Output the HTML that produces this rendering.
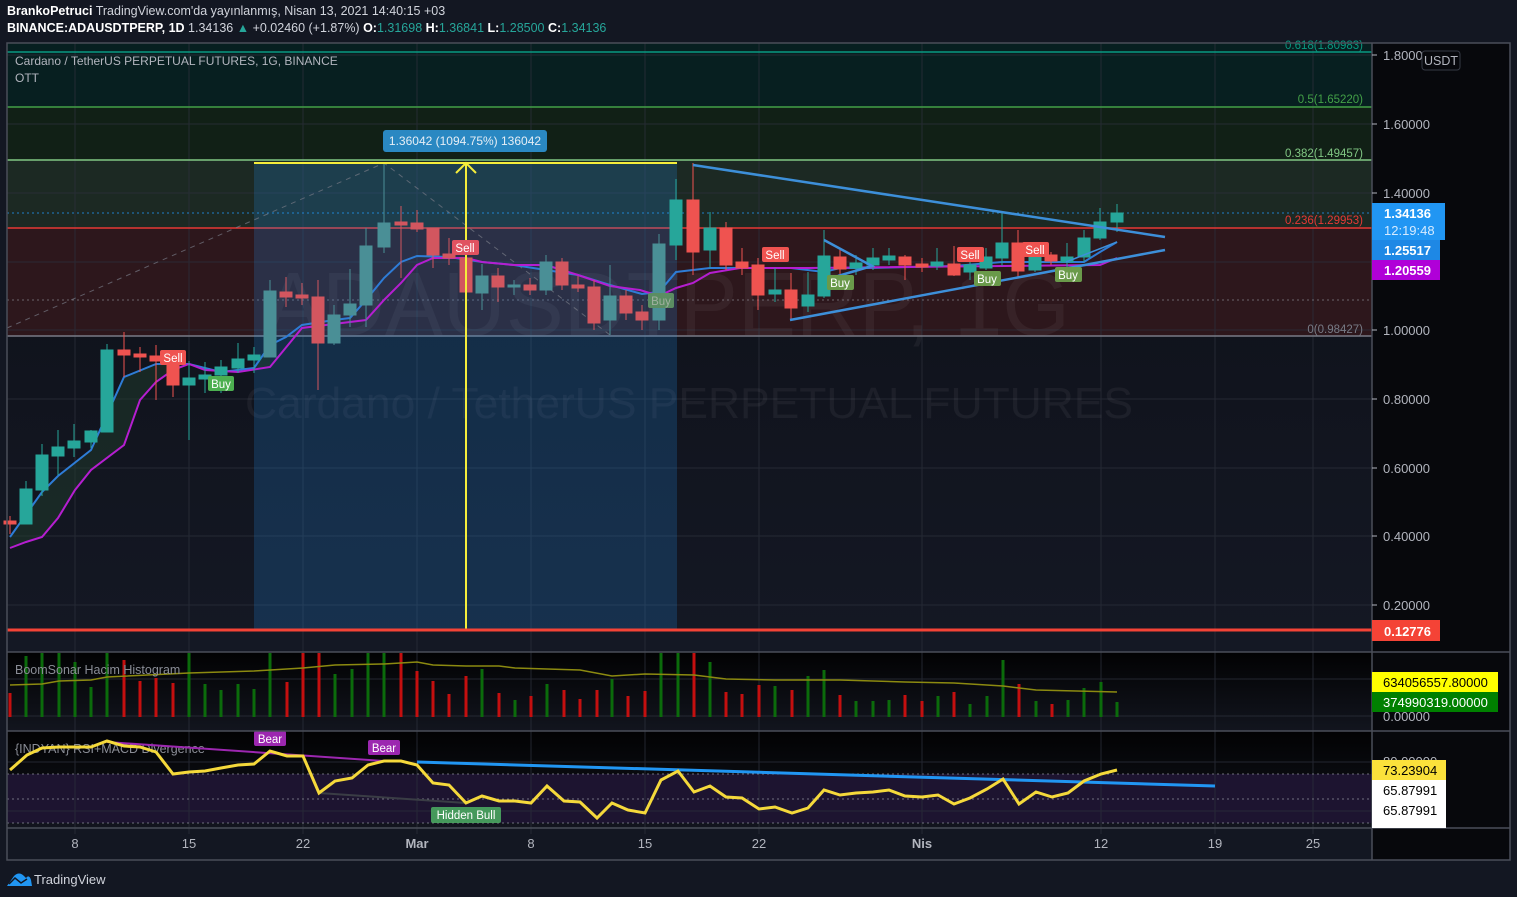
<!DOCTYPE html>
<html><head><meta charset="utf-8"><style>
html,body{margin:0;padding:0;background:#131722;width:1517px;height:897px;overflow:hidden;font-family:"Liberation Sans",sans-serif}
.h{position:absolute;left:7px;color:#d1d4dc;font-size:12.5px;white-space:nowrap}
</style></head><body>
<div class="h" style="top:4px"><b style="color:#fff">BrankoPetruci</b> TradingView.com'da yayınlanmış, Nisan 13, 2021 14:40:15 +03</div>
<div class="h" style="top:21px"><b style="color:#fff">BINANCE:ADAUSDTPERP, 1D</b> 1.34136 <span style="color:#26a69a">▲</span> +0.02460 (+1.87%) <b style="color:#fff">O:</b><span style="color:#26a69a">1.31698</span> <b style="color:#fff">H:</b><span style="color:#26a69a">1.36841</span> <b style="color:#fff">L:</b><span style="color:#26a69a">1.28500</span> <b style="color:#fff">C:</b><span style="color:#26a69a">1.34136</span></div>
<svg width="1517" height="897" style="position:absolute;left:0;top:0" font-family="Liberation Sans, sans-serif">
<defs>
<linearGradient id="pb" x1="0" y1="0" x2="0" y2="1"><stop offset="0" stop-color="#0d0f16"/><stop offset="1" stop-color="#141824"/></linearGradient>
<linearGradient id="vb" x1="0" y1="0" x2="0" y2="1"><stop offset="0" stop-color="#020203"/><stop offset="1" stop-color="#12151e"/></linearGradient>
</defs>
<rect x="7" y="43" width="1365" height="609" fill="url(#pb)"/>
<rect x="7" y="43" width="1365" height="64" fill="#071f20"/>
<rect x="7" y="107" width="1365" height="53" fill="#112016"/>
<rect x="7" y="160" width="1365" height="68" fill="#1c2923"/>
<rect x="7" y="228" width="1365" height="108" fill="#2d171c"/>
<rect x="1372" y="43" width="138" height="817" fill="#07080c"/>
<rect x="7" y="652" width="1365" height="79" fill="url(#vb)"/>
<rect x="7" y="731" width="1365" height="97" fill="url(#vb)"/>
<rect x="7" y="774" width="1365" height="49" fill="#1d1430"/>
<rect x="7" y="828" width="1365" height="32" fill="#131722"/>
<g stroke="#2a2e39" stroke-width="1" opacity="0.8">
<line x1="75" y1="43" x2="75" y2="834"/><line x1="189" y1="43" x2="189" y2="834"/><line x1="303" y1="43" x2="303" y2="834"/><line x1="417" y1="43" x2="417" y2="834"/><line x1="531" y1="43" x2="531" y2="834"/><line x1="645" y1="43" x2="645" y2="834"/><line x1="759" y1="43" x2="759" y2="834"/><line x1="922" y1="43" x2="922" y2="834"/><line x1="1101" y1="43" x2="1101" y2="834"/><line x1="1215" y1="43" x2="1215" y2="834"/><line x1="1313" y1="43" x2="1313" y2="834"/>
<line x1="7" y1="55" x2="1372" y2="55"/><line x1="7" y1="124" x2="1372" y2="124"/><line x1="7" y1="193" x2="1372" y2="193"/><line x1="7" y1="262" x2="1372" y2="262"/><line x1="7" y1="330" x2="1372" y2="330"/><line x1="7" y1="399" x2="1372" y2="399"/><line x1="7" y1="468" x2="1372" y2="468"/><line x1="7" y1="536" x2="1372" y2="536"/><line x1="7" y1="605" x2="1372" y2="605"/>
<line x1="7" y1="679" x2="1372" y2="679"/><line x1="7" y1="716" x2="1372" y2="716"/><line x1="7" y1="762" x2="1372" y2="762"/><line x1="7" y1="811" x2="1372" y2="811"/>
</g>
<text x="264" y="335" font-size="90" fill="#ffffff" fill-opacity="0.05" textLength="806" lengthAdjust="spacingAndGlyphs">ADAUSDTPERP, 1G</text>
<text x="245" y="418" font-size="44" fill="#ffffff" fill-opacity="0.05" textLength="888" lengthAdjust="spacingAndGlyphs">Cardano / TetherUS PERPETUAL FUTURES</text>
<line x1="7" y1="52" x2="1372" y2="52" stroke="#089981" stroke-width="1.5"/>
<line x1="7" y1="107" x2="1372" y2="107" stroke="#43a047" stroke-width="1.5"/>
<line x1="7" y1="160" x2="1372" y2="160" stroke="#81c784" stroke-width="1.5"/>
<line x1="7" y1="228" x2="1372" y2="228" stroke="#e53935" stroke-width="1.5"/>
<line x1="7" y1="336" x2="1372" y2="336" stroke="#787b86" stroke-width="1.5"/>
<g font-size="11.5" text-anchor="end">
<text x="1363" y="49" fill="#089981">0.618(1.80983)</text>
<text x="1363" y="103" fill="#43a047">0.5(1.65220)</text>
<text x="1363" y="157" fill="#81c784">0.382(1.49457)</text>
<text x="1363" y="224" fill="#e53935">0.236(1.29953)</text>
<text x="1363" y="333" fill="#787b86">0(0.98427)</text>
</g>
<line x1="7" y1="213" x2="1372" y2="213" stroke="#2196f3" stroke-dasharray="2 3" opacity="0.8"/>
<line x1="7" y1="300" x2="1372" y2="300" stroke="#9598a1" stroke-dasharray="2 3" opacity="0.6"/>
<rect x="254" y="163" width="423" height="467" fill="#2196f3" fill-opacity="0.2"/>
<polyline points="7,328 384,163 610,335" fill="none" stroke="#787b86" stroke-dasharray="5 5" opacity="0.7"/>
<polygon points="10,537 42,492 58,476 91,450 124,377 156,364 189,364 221,372 254,368 270,345 270,367 238,372 205,370 189,364 173,370 156,382 140,400 124,445 91,470 75,490 58,518 42,537 26,542 10,548" fill="#1f3b2b" opacity="0.5"/>
<polyline fill="none" stroke="#2e7cd6" stroke-width="2" points="10,537 42,492 58,476 91,450 124,377 156,364 189,364 221,372 254,368 270,345 286,337 302,325 334,320 350,318 366,300 384,278 401,262 417,256 449,257 482,262 514,265 546,270 578,275 610,285 642,294 659,292 676,272 710,268 758,268 791,268 824,272 840,268 870,268 954,266 1002,262 1084,262 1100,252 1117,242"/>
<polyline fill="none" stroke="#b51ed0" stroke-width="2" points="10,548 26,542 42,537 58,518 75,490 91,470 124,445 140,400 156,382 173,370 189,364 205,370 238,372 270,367 302,328 350,322 366,320 384,300 401,283 417,265 433,258 466,258 482,262 514,265 546,265 578,275 610,286 640,290 659,296 676,288 693,283 710,273 740,268 808,268 1100,265 1117,258"/>
<g stroke-width="1">
<g fill="#ef5350" stroke="#ef5350">
<line x1="10" y1="516" x2="10" y2="534"/><rect x="4" y="521" width="12" height="3"/>
<line x1="124" y1="332" x2="124" y2="377"/><rect x="118" y="350" width="12" height="5"/>
<line x1="140" y1="347" x2="140" y2="372"/><rect x="134" y="354" width="12" height="3"/>
<line x1="156" y1="345" x2="156" y2="400"/><rect x="150" y="356" width="12" height="5"/>
<line x1="173" y1="350" x2="173" y2="397"/><rect x="167" y="362" width="12" height="23"/>
<line x1="693" y1="163" x2="693" y2="275"/><rect x="687" y="200" width="12" height="52"/>
<line x1="726" y1="222" x2="726" y2="270"/><rect x="720" y="228" width="12" height="37"/>
<line x1="742" y1="248" x2="742" y2="275"/><rect x="736" y="262" width="12" height="6"/>
<line x1="758" y1="258" x2="758" y2="310"/><rect x="752" y="265" width="12" height="30"/>
<line x1="791" y1="273" x2="791" y2="320"/><rect x="785" y="290" width="12" height="18"/>
<line x1="840" y1="248" x2="840" y2="278"/><rect x="834" y="257" width="12" height="12"/>
<line x1="905" y1="255" x2="905" y2="280"/><rect x="899" y="257" width="12" height="8"/>
<line x1="922" y1="258" x2="922" y2="272"/><rect x="916" y="264" width="12" height="3"/>
<line x1="954" y1="246" x2="954" y2="276"/><rect x="948" y="264" width="12" height="11"/>
<line x1="1018" y1="230" x2="1018" y2="277"/><rect x="1012" y="243" width="12" height="28"/>
<line x1="1051" y1="252" x2="1051" y2="265"/><rect x="1045" y="255" width="12" height="6"/>
</g>
<g fill="#d2565f" stroke="#d2565f">
<line x1="286" y1="277" x2="286" y2="307"/><rect x="280" y="292" width="12" height="5"/>
<line x1="302" y1="283" x2="302" y2="305"/><rect x="296" y="295" width="12" height="3"/>
<line x1="318" y1="280" x2="318" y2="390"/><rect x="312" y="297" width="12" height="46"/>
<line x1="401" y1="206" x2="401" y2="278"/><rect x="395" y="222" width="12" height="3"/>
<line x1="417" y1="210" x2="417" y2="232"/><rect x="411" y="223" width="12" height="6"/>
<line x1="433" y1="228" x2="433" y2="268"/><rect x="427" y="228" width="12" height="27"/>
<line x1="449" y1="238" x2="449" y2="265"/><rect x="443" y="254" width="12" height="4"/>
<rect x="460" y="258" width="12" height="34"/>
<line x1="498" y1="268" x2="498" y2="302"/><rect x="492" y="276" width="12" height="11"/>
<line x1="530" y1="278" x2="530" y2="295"/><rect x="524" y="285" width="12" height="5"/>
<line x1="562" y1="258" x2="562" y2="290"/><rect x="556" y="262" width="12" height="23"/>
<line x1="578" y1="276" x2="578" y2="292"/><rect x="572" y="285" width="12" height="3"/>
<line x1="594" y1="280" x2="594" y2="330"/><rect x="588" y="287" width="12" height="36"/>
<line x1="626" y1="290" x2="626" y2="320"/><rect x="620" y="296" width="12" height="17"/>
<line x1="642" y1="305" x2="642" y2="330"/><rect x="636" y="312" width="12" height="8"/>
</g>
<g fill="#26a69a" stroke="#26a69a">
<line x1="26" y1="481" x2="26" y2="524"/><rect x="20" y="489" width="12" height="35"/>
<line x1="42" y1="444" x2="42" y2="496"/><rect x="36" y="455" width="12" height="35"/>
<line x1="58" y1="430" x2="58" y2="475"/><rect x="52" y="447" width="12" height="9"/>
<line x1="74" y1="424" x2="74" y2="457"/><rect x="68" y="441" width="12" height="7"/>
<line x1="91" y1="430" x2="91" y2="448"/><rect x="85" y="431" width="12" height="11"/>
<line x1="107" y1="344" x2="107" y2="432"/><rect x="101" y="350" width="12" height="82"/>
<line x1="189" y1="361" x2="189" y2="440"/><rect x="183" y="378" width="12" height="7"/>
<line x1="205" y1="362" x2="205" y2="393"/><rect x="199" y="375" width="12" height="4"/>
<line x1="221" y1="360" x2="221" y2="393"/><rect x="215" y="367" width="12" height="8"/>
<line x1="238" y1="343" x2="238" y2="373"/><rect x="232" y="359" width="12" height="9"/>
<line x1="254" y1="347" x2="254" y2="373"/><rect x="248" y="355" width="12" height="5"/>
<line x1="808" y1="272" x2="808" y2="312"/><rect x="802" y="295" width="12" height="11"/>
<line x1="824" y1="230" x2="824" y2="298"/><rect x="818" y="256" width="12" height="40"/>
<line x1="856" y1="255" x2="856" y2="275"/><rect x="850" y="263" width="12" height="5"/>
<line x1="873" y1="248" x2="873" y2="270"/><rect x="867" y="258" width="12" height="7"/>
<line x1="889" y1="248" x2="889" y2="265"/><rect x="883" y="256" width="12" height="4"/>
<line x1="937" y1="248" x2="937" y2="270"/><rect x="931" y="262" width="12" height="4"/>
<line x1="970" y1="250" x2="970" y2="280"/><rect x="964" y="265" width="12" height="7"/>
<line x1="986" y1="248" x2="986" y2="270"/><rect x="980" y="257" width="12" height="11"/>
<line x1="1002" y1="212" x2="1002" y2="266"/><rect x="996" y="243" width="12" height="15"/>
<line x1="1035" y1="250" x2="1035" y2="272"/><rect x="1029" y="255" width="12" height="15"/>
<line x1="1067" y1="243" x2="1067" y2="268"/><rect x="1061" y="257" width="12" height="5"/>
<line x1="1084" y1="230" x2="1084" y2="262"/><rect x="1078" y="238" width="12" height="19"/>
<line x1="1100" y1="208" x2="1100" y2="240"/><rect x="1094" y="222" width="12" height="16"/>
<line x1="1117" y1="204" x2="1117" y2="232"/><rect x="1111" y="213" width="12" height="9"/>
<line x1="676" y1="179" x2="676" y2="260"/><rect x="670" y="200" width="12" height="45"/>
<line x1="710" y1="212" x2="710" y2="268"/><rect x="704" y="228" width="12" height="22"/>
<line x1="775" y1="268" x2="775" y2="302"/><rect x="769" y="290" width="12" height="4"/>
</g>
<g fill="#4a8f96" stroke="#4a8f96">
<line x1="270" y1="280" x2="270" y2="357"/><rect x="264" y="291" width="12" height="66"/>
<line x1="334" y1="305" x2="334" y2="345"/><rect x="328" y="315" width="12" height="28"/>
<line x1="350" y1="269" x2="350" y2="327"/><rect x="344" y="304" width="12" height="11"/>
<line x1="366" y1="228" x2="366" y2="327"/><rect x="360" y="246" width="12" height="59"/>
<line x1="384" y1="163" x2="384" y2="253"/><rect x="378" y="223" width="12" height="24"/>
<line x1="482" y1="264" x2="482" y2="310"/><rect x="476" y="276" width="12" height="17"/>
<line x1="514" y1="280" x2="514" y2="295"/><rect x="508" y="285" width="12" height="2"/>
<line x1="546" y1="255" x2="546" y2="295"/><rect x="540" y="262" width="12" height="28"/>
<line x1="610" y1="265" x2="610" y2="335"/><rect x="604" y="296" width="12" height="24"/>
<line x1="659" y1="234" x2="659" y2="330"/><rect x="653" y="244" width="12" height="76"/>
</g>
</g>
<g stroke="#3d8fd9" stroke-width="2.5" fill="none">
<line x1="693" y1="165" x2="1165" y2="237"/>
<line x1="790" y1="320" x2="1165" y2="250"/>
<polyline points="824,240 872,266 838,276"/>
<line x1="1066" y1="262" x2="1117" y2="242" stroke-width="1.5"/>
</g>
<line x1="254" y1="163" x2="677" y2="163" stroke="#f5ed3b" stroke-width="2"/>
<line x1="254" y1="630" x2="677" y2="630" stroke="#f5ed3b" stroke-width="2"/>
<line x1="466" y1="163" x2="466" y2="630" stroke="#f5ed3b" stroke-width="2"/>
<polyline points="456,173 466,163 476,173" fill="none" stroke="#f5ed3b" stroke-width="2"/>
<line x1="7" y1="630" x2="1372" y2="630" stroke="#f44336" stroke-width="3"/>
<rect x="383" y="130" width="164" height="22" rx="3" fill="#2a88c2"/>
<text x="465" y="145" font-size="12" fill="#e6eef5" text-anchor="middle">1.36042 (1094.75%) 136042</text>
<g font-size="11.5" text-anchor="middle" fill="#fff">
<rect x="160" y="350" width="26" height="15" rx="2" fill="#ef5350"/><text x="173" y="362">Sell</text>
<rect x="452" y="240" width="27" height="15" rx="2" fill="#e05260"/><text x="465" y="252">Sell</text>
<rect x="762" y="247" width="27" height="15" rx="2" fill="#ef5350"/><text x="775" y="259">Sell</text>
<rect x="957" y="247" width="27" height="15" rx="2" fill="#ef5350"/><text x="970" y="259">Sell</text>
<rect x="1022" y="242" width="27" height="15" rx="2" fill="#ef5350"/><text x="1035" y="254">Sell</text>
<rect x="208" y="376" width="26" height="15" rx="2" fill="#4caf50"/><text x="221" y="388">Buy</text>
<rect x="648" y="293" width="26" height="15" rx="2" fill="#5b8d62"/><text x="661" y="305" fill="#a0b0a0">Buy</text>
<rect x="827" y="275" width="27" height="15" rx="2" fill="#6a9a4a"/><text x="840" y="287">Buy</text>
<rect x="974" y="271" width="27" height="15" rx="2" fill="#6a9a4a"/><text x="987" y="283">Buy</text>
<rect x="1055" y="267" width="27" height="15" rx="2" fill="#6a9a4a"/><text x="1068" y="279">Buy</text>
</g>
<text x="15" y="65" font-size="12" fill="#b2b5be">Cardano / TetherUS PERPETUAL FUTURES, 1G, BINANCE</text>
<text x="15" y="82" font-size="12" fill="#b2b5be">OTT</text>
<g stroke-width="3">
<g stroke="#c40f0f">
<line x1="10" y1="693" x2="10" y2="717"/><line x1="124" y1="660" x2="124" y2="717"/><line x1="140" y1="681" x2="140" y2="717"/><line x1="156" y1="678" x2="156" y2="717"/><line x1="173" y1="683" x2="173" y2="717"/><line x1="287" y1="682" x2="287" y2="717"/><line x1="303" y1="653" x2="303" y2="717"/><line x1="319" y1="653" x2="319" y2="717"/><line x1="401" y1="653" x2="401" y2="717"/><line x1="417" y1="671" x2="417" y2="717"/><line x1="433" y1="681" x2="433" y2="717"/><line x1="449" y1="694" x2="449" y2="717"/><line x1="466" y1="676" x2="466" y2="717"/><line x1="499" y1="693" x2="499" y2="717"/><line x1="531" y1="696" x2="531" y2="717"/><line x1="564" y1="690" x2="564" y2="717"/><line x1="580" y1="699" x2="580" y2="717"/><line x1="597" y1="690" x2="597" y2="717"/><line x1="628" y1="696" x2="628" y2="717"/><line x1="645" y1="691" x2="645" y2="717"/><line x1="694" y1="653" x2="694" y2="717"/><line x1="726" y1="692" x2="726" y2="717"/><line x1="742" y1="694" x2="742" y2="717"/><line x1="759" y1="685" x2="759" y2="717"/><line x1="792" y1="690" x2="792" y2="717"/><line x1="840" y1="695" x2="840" y2="717"/><line x1="905" y1="695" x2="905" y2="717"/><line x1="922" y1="701" x2="922" y2="717"/><line x1="954" y1="692" x2="954" y2="717"/><line x1="1019" y1="684" x2="1019" y2="717"/><line x1="1052" y1="704" x2="1052" y2="717"/>
</g>
<g stroke="#0b6b0b">
<line x1="26" y1="656" x2="26" y2="717"/><line x1="42" y1="653" x2="42" y2="717"/><line x1="59" y1="653" x2="59" y2="717"/><line x1="75" y1="662" x2="75" y2="717"/><line x1="91" y1="687" x2="91" y2="717"/><line x1="107" y1="653" x2="107" y2="717"/><line x1="189" y1="653" x2="189" y2="717"/><line x1="205" y1="684" x2="205" y2="717"/><line x1="221" y1="690" x2="221" y2="717"/><line x1="238" y1="684" x2="238" y2="717"/><line x1="254" y1="689" x2="254" y2="717"/><line x1="270" y1="653" x2="270" y2="717"/><line x1="335" y1="674" x2="335" y2="717"/><line x1="352" y1="669" x2="352" y2="717"/><line x1="368" y1="653" x2="368" y2="717"/><line x1="384" y1="653" x2="384" y2="717"/><line x1="482" y1="669" x2="482" y2="717"/><line x1="515" y1="700" x2="515" y2="717"/><line x1="547" y1="684" x2="547" y2="717"/><line x1="612" y1="679" x2="612" y2="717"/><line x1="661" y1="653" x2="661" y2="717"/><line x1="678" y1="653" x2="678" y2="717"/><line x1="710" y1="662" x2="710" y2="717"/><line x1="775" y1="686" x2="775" y2="717"/><line x1="808" y1="676" x2="808" y2="717"/><line x1="824" y1="670" x2="824" y2="717"/><line x1="856" y1="701" x2="856" y2="717"/><line x1="873" y1="701" x2="873" y2="717"/><line x1="889" y1="700" x2="889" y2="717"/><line x1="938" y1="696" x2="938" y2="717"/><line x1="970" y1="704" x2="970" y2="717"/><line x1="987" y1="696" x2="987" y2="717"/><line x1="1003" y1="660" x2="1003" y2="717"/><line x1="1036" y1="701" x2="1036" y2="717"/><line x1="1068" y1="700" x2="1068" y2="717"/><line x1="1084" y1="688" x2="1084" y2="717"/><line x1="1101" y1="682" x2="1101" y2="717"/><line x1="1117" y1="702" x2="1117" y2="717"/>
</g>
</g>
<polyline fill="none" stroke="#8c8a10" stroke-width="1.5" points="10,685 42,684 59,681 91,680 107,677 189,673 254,671 303,668 335,665 384,664 417,662 433,665 466,666 499,666 515,668 547,669 580,670 612,676 645,674 694,675 726,679 775,680 840,680 905,682 954,683 1003,686 1036,690 1117,692"/>
<text x="15" y="674" font-size="12.5" fill="#8a8d96">BoomSonar Hacim Histogram</text>
<g stroke="#9598a1" stroke-dasharray="2 3" opacity="0.7"><line x1="7" y1="774" x2="1372" y2="774"/><line x1="7" y1="799" x2="1372" y2="799"/><line x1="7" y1="823" x2="1372" y2="823"/></g>
<text x="15" y="753" font-size="12.5" fill="#8a8d96">{INDYAN} RSI+MACD Divergence</text>
<line x1="107" y1="742" x2="384" y2="761" stroke="#9c27b0" stroke-width="2"/>
<line x1="319" y1="793" x2="466" y2="803" stroke="#3a3d45" stroke-width="2"/>
<line x1="417" y1="762" x2="1215" y2="786" stroke="#2196f3" stroke-width="3"/>
<polyline fill="none" stroke="#f5d93b" stroke-width="3" points="10,770 27,755 42,748 59,747 91,747 107,741 124,746 140,747 156,752 173,774 189,772 205,771 221,768 238,765 254,764 270,751 287,756 303,756 319,793 335,781 352,778 368,765 384,761 401,761 417,765 433,783 449,785 466,803 482,796 499,801 515,801 531,803 547,786 564,801 580,802 597,818 612,803 628,810 645,813 661,780 678,771 694,792 710,786 726,797 742,798 759,809 775,807 792,813 808,808 824,790 840,795 856,793 873,792 889,790 905,796 922,797 938,795 954,804 970,798 987,789 1003,779 1019,804 1036,792 1052,797 1068,793 1084,781 1101,774 1117,770"/>
<g font-size="11.5" text-anchor="middle" fill="#fff">
<rect x="254" y="731" width="32" height="15" rx="2" fill="#9c27b0"/><text x="270" y="743">Bear</text>
<rect x="368" y="740" width="32" height="15" rx="2" fill="#9c27b0"/><text x="384" y="752">Bear</text>
<rect x="431" y="807" width="70" height="16" rx="2" fill="#4caf63" opacity="0.85"/><text x="466" y="819">Hidden Bull</text>
</g>
<g stroke="#4a4e59" fill="none" stroke-width="1.5">
<rect x="7" y="43" width="1503" height="817"/>
<line x1="1372" y1="43" x2="1372" y2="860"/>
<line x1="7" y1="652" x2="1510" y2="652"/><line x1="7" y1="731" x2="1510" y2="731"/><line x1="7" y1="828" x2="1510" y2="828"/>
</g>
<g font-size="13" fill="#b2b5be">
<text x="1383" y="60">1.80000</text><text x="1383" y="129">1.60000</text><text x="1383" y="198">1.40000</text><text x="1383" y="335">1.00000</text><text x="1383" y="404">0.80000</text><text x="1383" y="473">0.60000</text><text x="1383" y="541">0.40000</text><text x="1383" y="610">0.20000</text>
<text x="1383" y="721">0.00000</text><text x="1383" y="766">80.00000</text>
</g>
<g stroke="#b2b5be"><line x1="1372" y1="55" x2="1377" y2="55"/><line x1="1372" y1="124" x2="1377" y2="124"/><line x1="1372" y1="193" x2="1377" y2="193"/><line x1="1372" y1="330" x2="1377" y2="330"/><line x1="1372" y1="399" x2="1377" y2="399"/><line x1="1372" y1="468" x2="1377" y2="468"/><line x1="1372" y1="536" x2="1377" y2="536"/><line x1="1372" y1="605" x2="1377" y2="605"/></g>
<rect x="1422" y="51" width="38" height="19" rx="3" fill="#07080c" stroke="#363a45"/>
<text x="1441" y="65" font-size="12.5" fill="#b2b5be" text-anchor="middle">USDT</text>
<rect x="1372" y="203" width="73" height="37" fill="#2196f3"/>
<text x="1384" y="218" font-size="13" fill="#fff" font-weight="bold">1.34136</text>
<text x="1384" y="235" font-size="13" fill="#d6ebff">12:19:48</text>
<rect x="1372" y="240" width="68" height="20" fill="#1e88e5"/>
<text x="1384" y="255" font-size="13" fill="#fff" font-weight="bold">1.25517</text>
<rect x="1372" y="260" width="68" height="20" fill="#b000d8"/>
<text x="1384" y="275" font-size="13" fill="#fff" font-weight="bold">1.20559</text>
<rect x="1372" y="620" width="68" height="21" fill="#f44336"/>
<text x="1384" y="636" font-size="13" fill="#fff" font-weight="bold">0.12776</text>
<rect x="1372" y="672" width="126" height="20" fill="#ffff00"/>
<text x="1383" y="687" font-size="13" fill="#000">634056557.80000</text>
<rect x="1372" y="692" width="126" height="20" fill="#008000"/>
<text x="1383" y="707" font-size="13" fill="#fff">374990319.00000</text>
<rect x="1372" y="760" width="74" height="20" fill="#fbe13b"/>
<text x="1383" y="775" font-size="13" fill="#000">73.23904</text>
<rect x="1372" y="780" width="74" height="48" fill="#ffffff"/>
<text x="1383" y="795" font-size="13" fill="#000">65.87991</text>
<text x="1383" y="815" font-size="13" fill="#000">65.87991</text>
<g font-size="13" fill="#b2b5be" text-anchor="middle">
<text x="75" y="848">8</text><text x="189" y="848">15</text><text x="303" y="848">22</text><text x="417" y="848" font-weight="bold">Mar</text><text x="531" y="848">8</text><text x="645" y="848">15</text><text x="759" y="848">22</text><text x="922" y="848" font-weight="bold">Nis</text><text x="1101" y="848">12</text><text x="1215" y="848">19</text><text x="1313" y="848">25</text>
</g>
<path d="M7,886 L14,876 Q19,871 24,876 L26,878 Q29,874 31,880 L32,886 Z" fill="#2196f3"/>
<path d="M9,884 L15,878 L21,883 L27,879" fill="none" stroke="#131722" stroke-width="1.5"/>
<text x="34" y="884" font-size="13" fill="#d1d4dc">TradingView</text>
</svg>
</body></html>
